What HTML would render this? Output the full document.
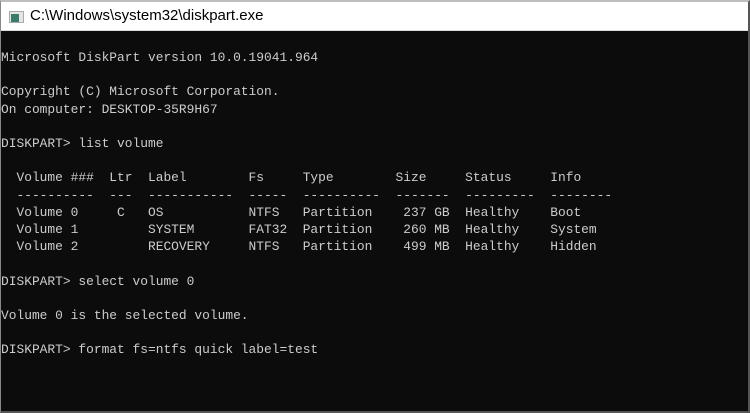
<!DOCTYPE html>
<html><head><meta charset="utf-8"><style>
html,body{margin:0;padding:0;}
body{width:750px;height:413px;overflow:hidden;background:#0c0c0c;position:relative;}
.frame{position:absolute;left:0;top:0;width:750px;height:413px;border-top:2px solid #bdbdbd;border-right:2px solid #555;border-bottom:2px solid #555;border-left:1px solid #888;box-sizing:border-box;}
.title{position:absolute;left:1px;top:2px;width:747px;height:28px;background:#fff;border-bottom:1px solid #ddd;}
.title .t{position:absolute;left:29px;top:5px;font:15px "Liberation Sans",sans-serif;color:#000;}
.icon{position:absolute;left:8px;top:9px;width:15px;height:12px;background:#e6e6e6;border:1px solid #aaa;box-sizing:border-box;}
.icon i{position:absolute;left:1px;top:2px;width:8px;height:8px;background:#3c7a6a;}
pre{position:absolute;left:1px;top:49px;margin:0;font-family:"Liberation Mono",monospace;font-size:12.9px;line-height:17.2px;color:#cccccc;}
</style></head><body>
<div class="frame"></div>
<div class="title"><div class="icon"><i></i></div><span class="t">C:\Windows\system32\diskpart.exe</span></div>
<pre>Microsoft DiskPart version 10.0.19041.964

Copyright (C) Microsoft Corporation.
On computer: DESKTOP-35R9H67

DISKPART&gt; list volume

  Volume ###  Ltr  Label        Fs     Type        Size     Status     Info
  ----------  ---  -----------  -----  ----------  -------  ---------  --------
  Volume 0     C   OS           NTFS   Partition    237 GB  Healthy    Boot
  Volume 1         SYSTEM       FAT32  Partition    260 MB  Healthy    System
  Volume 2         RECOVERY     NTFS   Partition    499 MB  Healthy    Hidden

DISKPART&gt; select volume 0

Volume 0 is the selected volume.

DISKPART&gt; format fs=ntfs quick label=test</pre>
</body></html>
